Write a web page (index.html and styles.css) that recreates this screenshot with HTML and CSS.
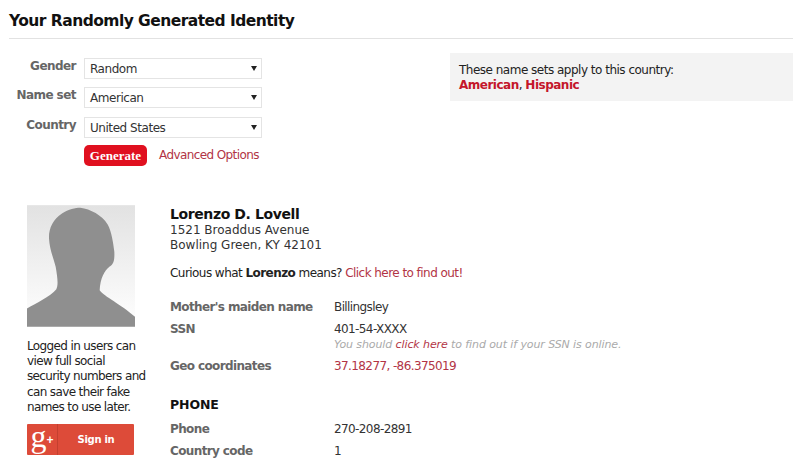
FILE: index.html
```html
<!DOCTYPE html>
<html lang="en">
<head>
<meta charset="utf-8">
<title>Your Randomly Generated Identity</title>
<link rel="stylesheet" href="styles.css">
</head>
<body>
<main class="page">
  <h1 class="title">Your Randomly Generated Identity</h1>
  <section class="top">
    <form class="form">
      <div class="row"><label class="label">Gender</label><div class="select"><span>Random</span></div></div>
      <div class="row"><label class="label">Name set</label><div class="select"><span>American</span></div></div>
      <div class="row"><label class="label">Country</label><div class="select"><span>United States</span></div></div>
      <div class="actions"><button class="generate" type="button">Generate</button><a class="link adv" href="#">Advanced Options</a></div>
    </form>
    <aside class="note">
      <div>These name sets apply to this country:</div>
      <div><a class="strong-link" href="#">American</a>, <a class="strong-link" href="#">Hispanic</a></div>
    </aside>
  </section>
  <section class="content">
    <div class="side">
      <svg class="photo" viewBox="80 30 324 365" aria-hidden="true">
        <defs><linearGradient id="bg" x1="0" y1="0" x2="0" y2="1"><stop offset="0" stop-color="#e2e2e2"/><stop offset="1" stop-color="#ffffff"/></linearGradient></defs>
        <rect x="80" y="30" width="324" height="365" fill="url(#bg)"/>
        <path fill="#8f8f8f" d="M80 395V340C105 324 150 305 168 282 174 270 172 250 166 215 160 190 148 165 146 130 145 100 158 72 185 55 205 42 225 38 240 38 270 42 305 60 322 88 334 110 338 140 342 170 343 195 340 208 328 214 312 226 300 250 298 285 312 305 360 325 404 365V395Z"/>
      </svg>
      <p class="promo">Logged in users can view full social security numbers and can save their fake names to use later.</p>
      <a class="gplus" href="#"><span class="gmark">g<sup class="plus">+</sup></span><span class="gtext">Sign in</span></a>
    </div>
    <div class="details">
      <div class="name">Lorenzo D. Lovell</div>
      <div class="addr">1521 Broaddus Avenue<br>Bowling Green, KY 42101</div>
      <p class="curious">Curious what <b>Lorenzo</b> means? <a class="link" href="#">Click here to find out!</a></p>
      <dl class="facts first">
        <dt>Mother's maiden name</dt><dd>Billingsley</dd>
        <dt>SSN</dt><dd>401-54-XXXX<div class="hint">You should <a class="link" href="#">click here</a> to find out if your SSN is online.</div></dd>
        <dt>Geo coordinates</dt><dd><a class="link" href="#">37.18277, -86.375019</a></dd>
      </dl>
      <h2 class="section">PHONE</h2>
      <dl class="facts">
        <dt>Phone</dt><dd>270-208-2891</dd>
        <dt>Country code</dt><dd>1</dd>
      </dl>
    </div>
  </section>
</main>
</body>
</html>
```
FILE: styles.css
```css
* { box-sizing: border-box; }
html, body { margin: 0; height: 468px; overflow: hidden; background: #fff; }
body { font-family: "DejaVu Sans", sans-serif; font-size: 12px; color: #222; line-height: 15.4px; letter-spacing: -0.55px; }
.page { padding: 0 7px 0 9px; }
.title { margin: 0; padding: 11px 0 8px; height: 39px; font-size: 15.5px; line-height: 20px; color: #111; border-bottom: 1px solid #e2e2e2; letter-spacing: -0.54px; }
.top { display: flex; justify-content: space-between; align-items: flex-start; padding-top: 14px; height: 166px; }
.form { display: flex; flex-direction: column; padding-top: 5px; }
.row { display: flex; align-items: flex-start; gap: 8px; height: 29.3px; }
.label { width: 67px; padding-top: 1px; text-align: right; font-weight: bold; color: #666; font-size: 12px; line-height: 15px; letter-spacing: -0.55px; }
.select { position: relative; width: 178px; height: 21px; border: 1px solid #e4e4e4; background: #fff; padding: 3px 5px; line-height: 15px; color: #333; letter-spacing: -0.45px; }
.select::after { content: ""; position: absolute; right: 4px; top: 7px; border: 3.5px solid transparent; border-top: 5px solid #222; border-bottom: 0; }
.actions { display: flex; align-items: center; margin: -1px 0 0 75px; gap: 12px; }
.generate { width: 63px; height: 21px; padding: 0; border: 0; border-radius: 5px; background: #e0101f; color: #fff; font: bold 13px/21px "Liberation Serif", serif; letter-spacing: 0; }
.link { color: #b23445; text-decoration: none; }
.adv { letter-spacing: -0.6px; }
.note { width: 343px; height: 48px; margin-top: 0; padding: 10px 9px; background: #f3f3f3; color: #222; letter-spacing: -0.5px; }
.strong-link { color: #c4162b; font-weight: bold; text-decoration: none; }
.content { display: flex; padding: 0 0 0 18px; }
.side { width: 143px; flex: none; }
.photo { display: block; width: 108px; height: 122px; }
.promo { margin: 12px 0 9px; width: 122px; line-height: 15.2px; color: #222; letter-spacing: -0.63px; }
.gplus { display: flex; width: 107px; height: 31px; background: #dd4b39; color: #fff; text-decoration: none; border-radius: 1px; }
.gmark { width: 31px; border-right: 1px solid #c4402f; font: 32px/24px "Liberation Serif", serif; text-align: center; letter-spacing: 0; white-space: nowrap; }
.plus { font: bold 12px/0 "Liberation Sans", sans-serif; vertical-align: 3px; }
.gtext { flex: 1; text-align: center; font-weight: bold; font-size: 10px; line-height: 31px; letter-spacing: -0.3px; }
.details { flex: 1; padding-top: 1px; }
.name { font-size: 14px; font-weight: bold; color: #111; line-height: 16px; letter-spacing: -0.4px; }
.addr { padding-top: 1px; line-height: 15.4px; color: #333; letter-spacing: 0; }
.curious { margin: 12px 0 0; }
.facts { display: grid; grid-template-columns: 164px 1fr; margin: 0; row-gap: 6.5px; }
.facts.first { margin-top: 19px; }
.facts dt { font-weight: bold; color: #666; letter-spacing: -0.62px; }
.facts dd { margin: 0; color: #333; letter-spacing: -0.6px; }
.hint { margin-top: -1px; font-style: italic; font-size: 11px; color: #aaa; line-height: 16px; letter-spacing: -0.1px; }
.section { margin: 23px 0 9px; font-size: 12.5px; line-height: 16px; color: #111; letter-spacing: -0.1px; }
```
